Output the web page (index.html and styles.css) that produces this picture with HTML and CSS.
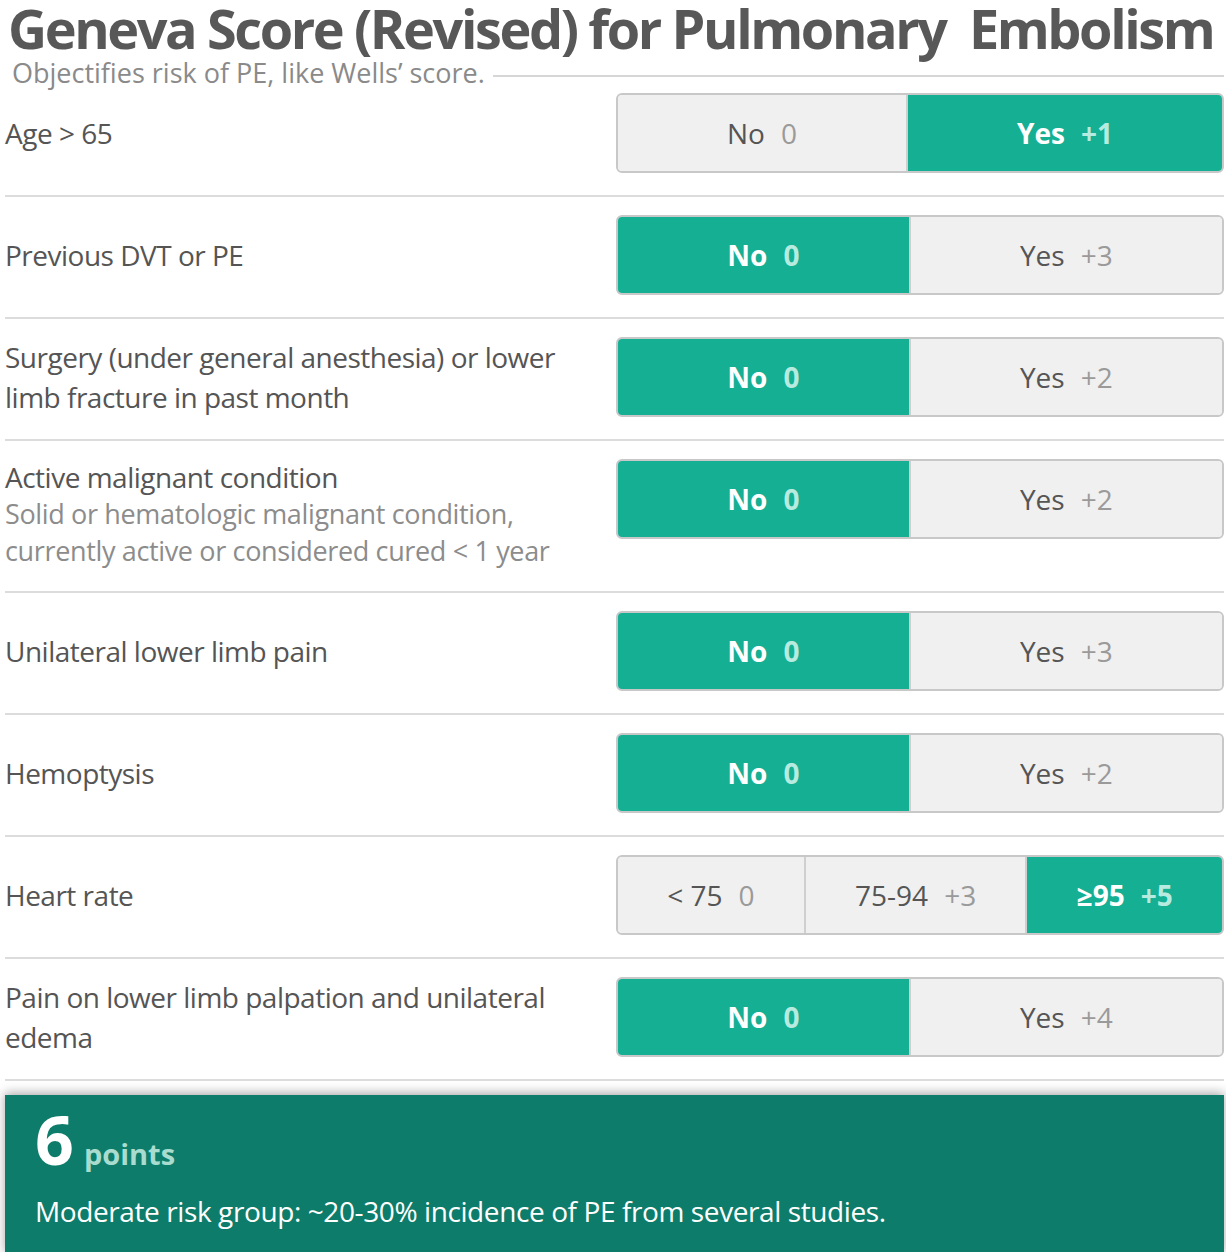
FILE: index.html
```html
<!DOCTYPE html>
<html lang="en">
<head>
<meta charset="utf-8">
<title>Geneva Score (Revised) for Pulmonary Embolism</title>
<link rel="stylesheet" href="styles.css">
</head>
<body>
<div class="page">
  <header class="header">
    <h1 class="title">Geneva Score (Revised) for Pulmonary&nbsp; Embolism</h1>
    <div class="subtitle-row">
      <p class="subtitle">Objectifies risk of PE, like Wells’ score.</p>
      <span class="subtitle-rule"></span>
    </div>
  </header>

  <div class="row row-first">
    <div class="label"><span class="label-main">Age &gt; 65</span></div>
    <div class="seg">
      <div class="opt"><span class="opt-text">No</span><span class="opt-pts">0</span></div>
      <div class="opt is-on"><span class="opt-text">Yes</span><span class="opt-pts">+1</span></div>
    </div>
  </div>

  <div class="row">
    <div class="label"><span class="label-main">Previous DVT or PE</span></div>
    <div class="seg">
      <div class="opt is-on"><span class="opt-text">No</span><span class="opt-pts">0</span></div>
      <div class="opt"><span class="opt-text">Yes</span><span class="opt-pts">+3</span></div>
    </div>
  </div>

  <div class="row">
    <div class="label"><span class="label-main">Surgery (under general anesthesia) or lower limb fracture in past month</span></div>
    <div class="seg">
      <div class="opt is-on"><span class="opt-text">No</span><span class="opt-pts">0</span></div>
      <div class="opt"><span class="opt-text">Yes</span><span class="opt-pts">+2</span></div>
    </div>
  </div>

  <div class="row">
    <div class="label label-top">
      <span class="label-main label-tight">Active malignant condition</span>
      <span class="label-sub">Solid or hematologic malignant condition, currently active or considered cured &lt; 1 year</span>
    </div>
    <div class="seg">
      <div class="opt is-on"><span class="opt-text">No</span><span class="opt-pts">0</span></div>
      <div class="opt"><span class="opt-text">Yes</span><span class="opt-pts">+2</span></div>
    </div>
  </div>

  <div class="row">
    <div class="label"><span class="label-main">Unilateral lower limb pain</span></div>
    <div class="seg">
      <div class="opt is-on"><span class="opt-text">No</span><span class="opt-pts">0</span></div>
      <div class="opt"><span class="opt-text">Yes</span><span class="opt-pts">+3</span></div>
    </div>
  </div>

  <div class="row">
    <div class="label"><span class="label-main">Hemoptysis</span></div>
    <div class="seg">
      <div class="opt is-on"><span class="opt-text">No</span><span class="opt-pts">0</span></div>
      <div class="opt"><span class="opt-text">Yes</span><span class="opt-pts">+2</span></div>
    </div>
  </div>

  <div class="row">
    <div class="label"><span class="label-main">Heart rate</span></div>
    <div class="seg">
      <div class="opt"><span class="opt-text">&lt; 75</span><span class="opt-pts">0</span></div>
      <div class="opt"><span class="opt-text">75-94</span><span class="opt-pts">+3</span></div>
      <div class="opt is-on"><span class="opt-text">≥95</span><span class="opt-pts">+5</span></div>
    </div>
  </div>

  <div class="row">
    <div class="label"><span class="label-main">Pain on lower limb palpation and unilateral edema</span></div>
    <div class="seg">
      <div class="opt is-on"><span class="opt-text">No</span><span class="opt-pts">0</span></div>
      <div class="opt"><span class="opt-text">Yes</span><span class="opt-pts">+4</span></div>
    </div>
  </div>

  <section class="result">
    <div class="result-score"><span class="result-num">6</span><span class="result-unit">points</span></div>
    <p class="result-text">Moderate risk group: ~20-30% incidence of PE from several studies.</p>
  </section>
</div>
</body>
</html>
```

FILE: styles.css
```css
* { box-sizing: border-box; }

html, body {
  margin: 0;
  padding: 0;
  background: #ffffff;
}

body {
  font-family: "Open Sans", "Noto Sans", "Liberation Sans", sans-serif;
  color: #555555;
  overflow: hidden;
}

.page {
  width: 1224px;
  padding-left: 5px;
}

.header {
  padding-left: 3px;
}

.title {
  margin: 0;
  font-size: 54px;
  line-height: 56px;
  font-weight: 700;
  color: #585858;
  white-space: nowrap;
  letter-spacing: -2.4px;
}

.subtitle-row {
  display: flex;
  align-items: center;
  height: 34px;
}

.subtitle {
  margin: 0 8px 0 4px;
  font-size: 27px;
  line-height: 34px;
  color: #8a8a8a;
  white-space: nowrap;
}

.subtitle-rule {
  flex: 1;
  height: 2px;
  margin-top: 5px;
  background: #d6d6d6;
}

.row {
  display: flex;
  align-items: flex-start;
  padding: 18px 0 22px;
  border-bottom: 2px solid #dcdcdc;
}

.row-first {
  padding-top: 3px;
}

.label {
  flex: 1;
  min-height: 80px;
  display: flex;
  flex-direction: column;
  justify-content: center;
  padding-right: 20px;
  font-size: 28px;
  line-height: 40px;
  letter-spacing: -0.5px;
  color: #555555;
}

.label-top {
  justify-content: flex-start;
}

.label-tight {
  line-height: 36px;
}

.label-sub {
  color: #8c8c8c;
  line-height: 37px;
  font-size: 27px;
  letter-spacing: -0.35px;
}

.seg {
  flex: 0 0 608px;
  width: 608px;
  height: 80px;
  display: flex;
  border: 2px solid #c8c8c8;
  border-radius: 6px;
  overflow: hidden;
  background: #f0f0f0;
}

.opt {
  flex: 1 1 auto;
  display: flex;
  align-items: center;
  justify-content: center;
  padding: 0 20px;
  font-size: 28px;
  color: #555555;
  background: #f0f0f0;
  white-space: nowrap;
}

.opt + .opt {
  border-left: 2px solid #cfcfcf;
}

.opt-pts {
  margin-left: 16px;
  color: #9a9a9a;
}

.opt.is-on {
  background: #15af94;
  color: #ffffff;
  font-weight: 700;
}

.opt.is-on .opt-pts {
  color: #b8ebdf;
}

.result {
  margin-top: 14px;
  background: #0e7c6a;
  color: #ffffff;
  padding: 6px 30px 20px;
  box-shadow: 0 -2px 10px rgba(0, 0, 0, 0.35);
  min-height: 160px;
}

.result-score {
  display: flex;
  align-items: baseline;
}

.result-num {
  font-size: 68px;
  line-height: 76px;
  font-weight: 700;
}

.result-unit {
  margin-left: 10px;
  font-size: 29px;
  font-weight: 700;
  color: #a9dccf;
}

.result-text {
  margin: 14px 0 0;
  font-size: 28px;
  line-height: 40px;
  letter-spacing: -0.4px;
}
```
